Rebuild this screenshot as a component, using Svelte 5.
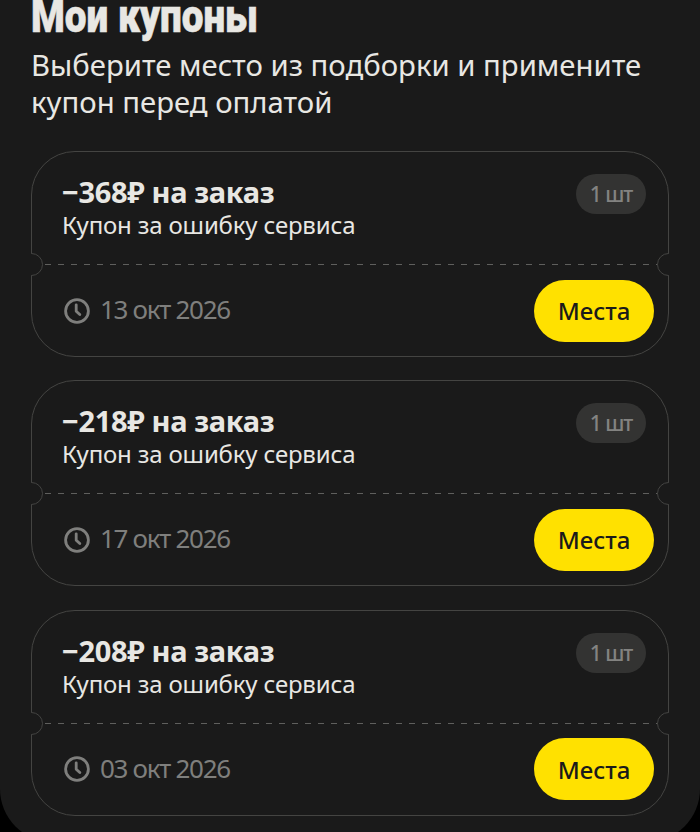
<script>
    const coupons = [
        { amount: "368", date: "13 окт 2026" },
        { amount: "218", date: "17 окт 2026" },
        { amount: "208", date: "03 окт 2026" }
    ];
</script>

<div class="sheet">
    <h1>Мои купоны</h1>
    <p class="lead">Выберите место из подборки и примените купон перед оплатой</p>

    <div class="list">
        {#each coupons as c}
            <div class="card">
                <div class="top">
                    <div>
                        <div class="title">−{c.amount}₽ на заказ</div>
                        <div class="desc">Купон за ошибку сервиса</div>
                    </div>
                    <div class="badge">1 шт</div>
                </div>
                <div class="sep">
                    <span class="notch left"></span>
                    <span class="notch right"></span>
                </div>
                <div class="bottom">
                    <div class="date">
                        <svg width="26" height="26" viewBox="0 0 26 26" fill="none" stroke="#7f7f7d" stroke-width="2.8" stroke-linecap="round" stroke-linejoin="round">
                            <circle cx="13" cy="13" r="11.4" />
                            <path d="M12.2 6.8v6.4l3.6 3.4" />
                        </svg>
                        <span class="date-text">{c.date}</span>
                    </div>
                    <div class="btn">Места</div>
                </div>
            </div>
        {/each}
    </div>
</div>

<style>
    :global(body) {
        margin: 0;
        background: #000;
        overflow: hidden;
    }

    .sheet {
        height: 842px;
        box-sizing: border-box;
        padding: 0 31px;
        background: #1a1a1a;
        border-radius: 0 0 53px 53px;
        overflow: hidden;
        font-family: "Noto Sans", sans-serif;
        color: #e8e7e3;
    }

    h1 {
        margin: -11px 0 0;
        font-family: Roboto, sans-serif;
        font-size: 46px;
        line-height: 54px;
        font-weight: 900;
        white-space: nowrap;
        -webkit-text-stroke: 0.6px #e8e7e3;
        transform: scaleX(0.84);
        transform-origin: left;
    }

    .lead {
        margin: 3.5px 0 0;
        font-size: 29.3px;
        line-height: 37px;
    }

    .list {
        display: flex;
        flex-direction: column;
        gap: 23.33px;
        margin-top: 30.5px;
    }

    .card {
        height: 206px;
        box-sizing: border-box;
        border: 1px solid #444442;
        border-radius: 44px;
        width: 638px;
        display: flex;
        flex-direction: column;
    }

    .top {
        height: 112px;
        box-sizing: border-box;
        padding: 21px 22px 0 30px;
        display: flex;
        justify-content: space-between;
        align-items: flex-start;
    }

    .title {
        font-size: 29px;
        line-height: 38px;
        font-weight: 700;
        letter-spacing: -0.35px;
    }

    .desc {
        font-size: 24px;
        line-height: 28px;
        letter-spacing: -0.17px;
    }

    .badge {
        width: 70px;
        height: 40px;
        margin-top: 1px;
        border-radius: 20px;
        background: #333332;
        color: #838381;
        font-size: 21px;
        font-weight: 500;
        letter-spacing: -1px;
        display: flex;
        align-items: center;
        justify-content: center;
    }

    .sep {
        position: relative;
        height: 1px;
        margin: 0 10px 0 13px;
        background: repeating-linear-gradient(to right, #5f5f5d 0 6px, transparent 6px 13px);
    }

    .notch {
        position: absolute;
        top: -11px;
        width: 21px;
        height: 21px;
        border: 1px solid #444442;
        border-radius: 50%;
        background: #1a1a1a;
    }

    .notch.left {
        left: -25px;
        clip-path: inset(-1px -1px -1px 11px);
    }

    .notch.right {
        right: -22px;
        clip-path: inset(-1px 11px -1px -1px);
    }

    .bottom {
        flex: 1;
        padding: 0 14px 0 32px;
        display: flex;
        justify-content: space-between;
        align-items: center;
    }

    .date {
        display: flex;
        align-items: center;
        gap: 10px;
        color: #7f7f7d;
        font-size: 26px;
        line-height: 30px;
        letter-spacing: -1.3px;
    }

    .date-text {
        margin-top: -3px;
    }

    .btn {
        width: 120px;
        height: 62px;
        border-radius: 31px;
        background: #ffe100;
        color: #1a1a1a;
        font-size: 24px;
        font-weight: 500;
        display: flex;
        align-items: center;
        justify-content: center;
    }
</style>
